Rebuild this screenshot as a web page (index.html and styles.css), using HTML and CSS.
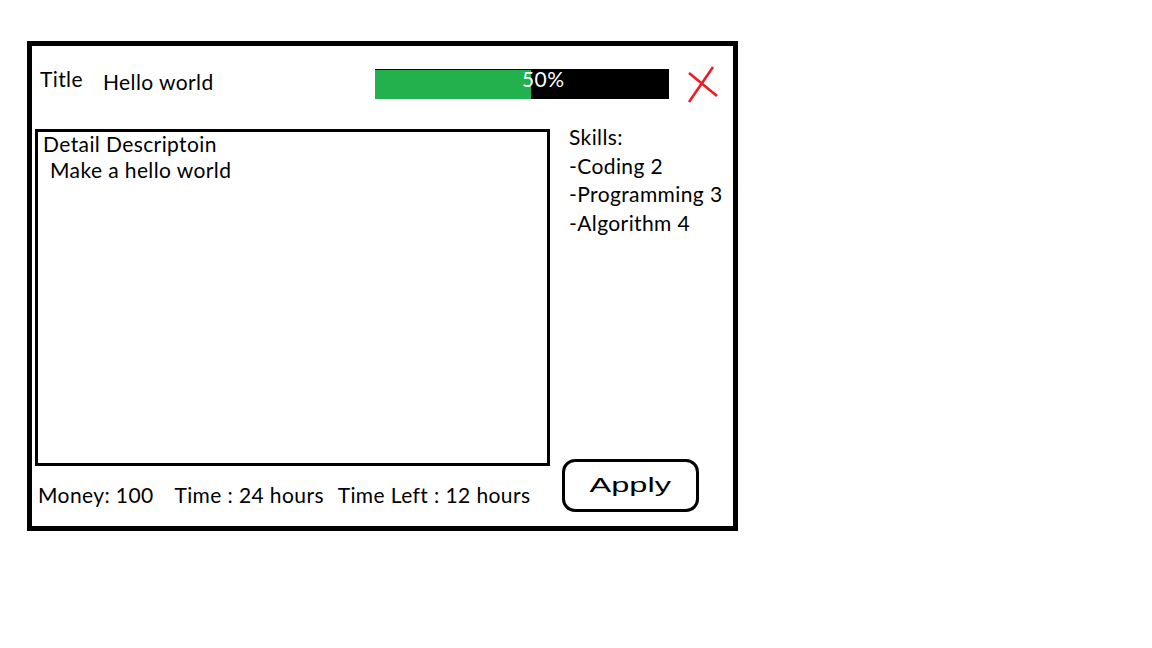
FILE: index.html
```html
<!DOCTYPE html>
<html lang="en">
<head>
<meta charset="utf-8">
<title>Task</title>
<link rel="stylesheet" href="styles.css">
</head>
<body>
<div class="page">
  <div class="window">
    <div class="header">
      <span class="title">Title</span>
      <span class="name">Hello world</span>
      <div class="bar">
        <div class="fill" style="width:156px"></div>
        <span class="pct">50%</span>
      </div>
      <svg class="close" width="34" height="40" viewBox="0 0 34 40">
        <line x1="3" y1="8" x2="31" y2="31" stroke="#ed1c24" stroke-width="2.6"/>
        <line x1="27" y1="2" x2="3" y2="37" stroke="#ed1c24" stroke-width="2.6"/>
      </svg>
    </div>
    <div class="main">
      <div class="left">
        <div class="desc">
          <div class="desc-title">Detail Descriptoin</div>
          <div class="desc-text">Make a hello world</div>
        </div>
        <div class="footer">
          <span class="money">Money: 100</span>
          <span class="time">Time : 24 hours</span>
          <span class="left-time">Time Left : 12 hours</span>
        </div>
      </div>
      <div class="right">
        <div class="skills">
          <div>Skills:</div>
          <div>-Coding 2</div>
          <div>-Programming 3</div>
          <div>-Algorithm 4</div>
        </div>
        <div class="apply"><span class="apply-label">Apply</span></div>
      </div>
    </div>
  </div>
</div>
</body>
</html>
```

FILE: styles.css
```css
* { box-sizing: border-box; }
html, body { margin: 0; padding: 0; background: #fff; }
body {
  font-family: Lato, "Open Sans", sans-serif;
  font-size: 21px;
  letter-spacing: 0.4px;
  color: #000;
}
.page {
  padding: 41px 0 0 27px;
  width: 1152px;
  height: 648px;
}
.window {
  width: 711px;
  height: 490px;
  border: 5px solid #000;
}
.header {
  display: flex;
  align-items: flex-start;
  height: 77px;
  padding-left: 8px;
}
.title {
  width: 63px;
  margin-top: 21px;
  line-height: 24px;
}
.name {
  width: 272px;
  margin-top: 24px;
  line-height: 24px;
}
.bar {
  position: relative;
  width: 294px;
  height: 30px;
  margin-top: 23px;
  background: #000;
  border-top: 1px solid #000;
}
.fill {
  height: 100%;
  background: #22b14c;
}
.pct {
  position: absolute;
  left: 147px;
  top: -1px;
  line-height: 20px;
  color: #fff;
}
.close {
  display: block;
  margin-left: 17px;
  margin-top: 19px;
}
.main {
  display: grid;
  grid-template-columns: 518px 171px;
  column-gap: 12px;
  height: 403px;
}
.left {
  padding-left: 3px;
}
.desc {
  margin-top: 6px;
  width: 515px;
  height: 337px;
  border: 3px solid #000;
  padding: 0 0 0 5px;
  line-height: 24px;
}
.desc-text {
  padding-left: 7px;
  margin-top: 2px;
}
.footer {
  margin-top: 17px;
  padding-left: 3px;
  line-height: 24px;
  white-space: nowrap;
}
.time { margin-left: 15px; }
.left-time { margin-left: 8px; }
.right {
  display: flex;
  flex-direction: column;
}
.skills {
  padding-left: 7px;
  line-height: 28.5px;
  white-space: nowrap;
}
.apply {
  margin-top: auto;
  margin-bottom: 14px;
  width: 137px;
  height: 53px;
  border: 3px solid #000;
  border-radius: 13px;
  display: flex;
  align-items: center;
  justify-content: center;
}
.apply-label {
  font-family: "Liberation Sans", Arial, sans-serif;
  font-size: 21px;
  letter-spacing: 0;
  line-height: 24px;
  display: inline-block;
  transform: scaleX(1.55);
  margin-top: -2px;
}
```
